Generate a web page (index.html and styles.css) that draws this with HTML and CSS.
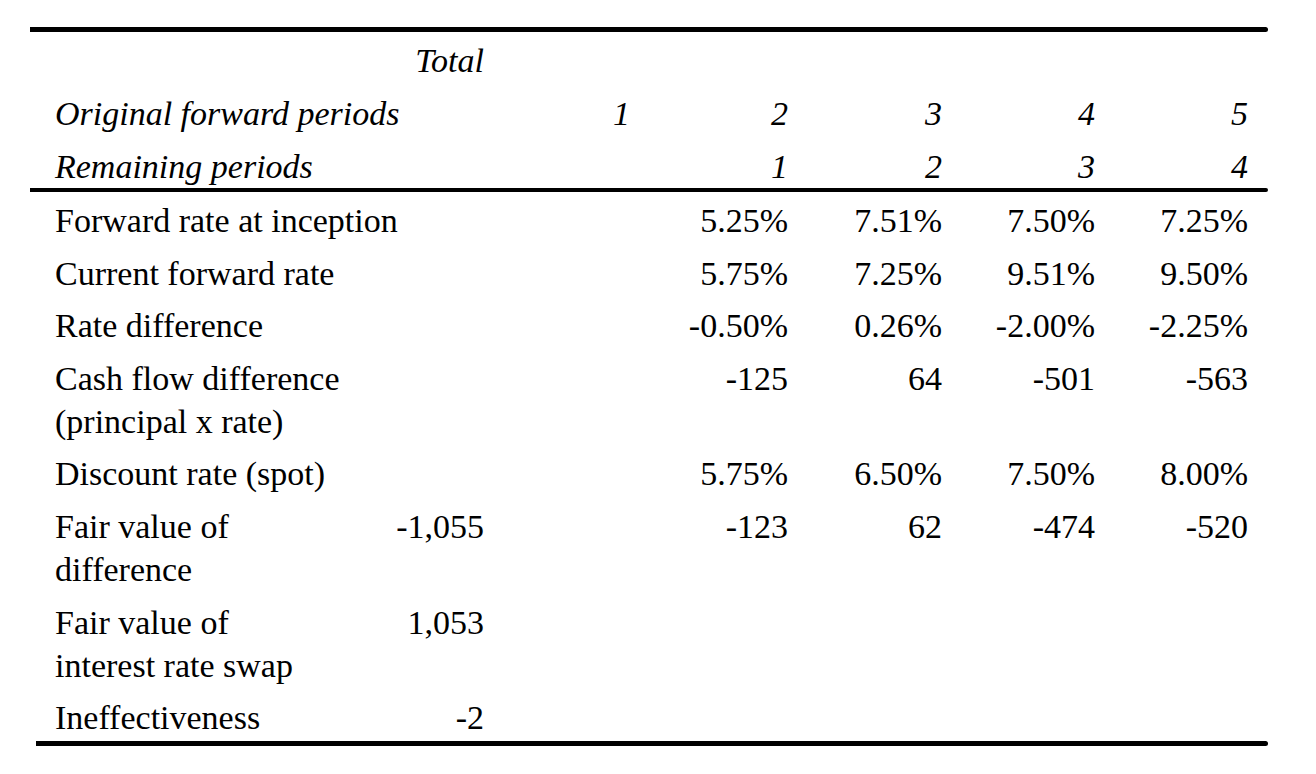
FILE: index.html
```html
<!DOCTYPE html>
<html>
<head>
<meta charset="utf-8">
<link rel="stylesheet" href="styles.css">
</head>
<body>
<div class="sheet">
  <div class="rule rule-top"></div>
  <div class="grid head">
    <div class="label"></div><div class="num">Total</div><div></div><div></div><div></div><div></div><div></div>
    <div class="label">Original forward periods</div><div></div><div class="num">1</div><div class="num">2</div><div class="num">3</div><div class="num">4</div><div class="num">5</div>
    <div class="label">Remaining periods</div><div></div><div></div><div class="num">1</div><div class="num">2</div><div class="num">3</div><div class="num">4</div>
  </div>
  <div class="rule rule-mid"></div>
  <div class="grid body">
    <div class="label">Forward rate at inception</div><div></div><div></div><div class="num">5.25%</div><div class="num">7.51%</div><div class="num">7.50%</div><div class="num">7.25%</div>
    <div class="label">Current forward rate</div><div></div><div></div><div class="num">5.75%</div><div class="num">7.25%</div><div class="num">9.51%</div><div class="num">9.50%</div>
    <div class="label">Rate difference</div><div></div><div></div><div class="num">-0.50%</div><div class="num">0.26%</div><div class="num">-2.00%</div><div class="num">-2.25%</div>
    <div class="label">Cash flow difference<br>(principal x rate)</div><div></div><div></div><div class="num">-125</div><div class="num">64</div><div class="num">-501</div><div class="num">-563</div>
    <div class="label">Discount rate (spot)</div><div></div><div></div><div class="num">5.75%</div><div class="num">6.50%</div><div class="num">7.50%</div><div class="num">8.00%</div>
    <div class="label">Fair value of<br>difference</div><div class="num">-1,055</div><div></div><div class="num">-123</div><div class="num">62</div><div class="num">-474</div><div class="num">-520</div>
    <div class="label">Fair value of<br>interest rate swap</div><div class="num">1,053</div><div></div><div></div><div></div><div></div><div></div>
    <div class="label">Ineffectiveness</div><div class="num">-2</div><div></div><div></div><div></div><div></div><div></div>
  </div>
  <div class="rule rule-bottom"></div>
</div>
</body>
</html>
```
FILE: styles.css
```css
html, body {
  margin: 0;
  padding: 0;
  background: #ffffff;
}

body {
  font-family: "Liberation Serif", "Times New Roman", serif;
  color: #000000;
  font-size: 34px;
}

.sheet {
  width: 1238px;
  margin: 27px 0 0 30px;
}

.rule {
  height: 5px;
  background: #000000;
  border-radius: 0 3px 3px 0;
}

.rule-mid {
  height: 4px;
}

.rule-bottom {
  margin-left: 6px;
  margin-top: 2px;
}

.grid {
  display: grid;
  grid-template-columns: 300px 129px 146px 158px 154px 153px 153px;
  padding-left: 25px;
  padding-right: 20px;
  line-height: 43px;
}

.head {
  font-style: italic;
  row-gap: 10px;
  padding-top: 7px;
}

.body {
  row-gap: 9.6px;
  padding-top: 7px;
}

.label {
  white-space: nowrap;
}

.num {
  text-align: right;
  white-space: nowrap;
}
```
